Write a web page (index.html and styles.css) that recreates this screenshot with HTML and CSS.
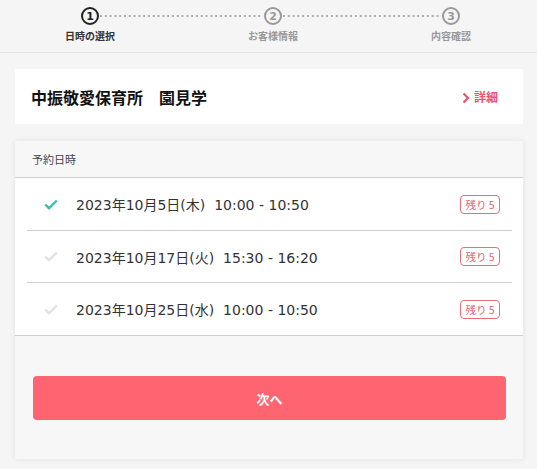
FILE: index.html
```html
<!DOCTYPE html>
<html lang="ja">
<head>
<meta charset="utf-8">
<link rel="stylesheet" href="styles.css">
</head>
<body>
<header class="stepper">
  <div class="step active"><span class="circle">1</span><span class="label">日時の選択</span></div>
  <div class="dots"></div>
  <div class="step"><span class="circle">2</span><span class="label">お客様情報</span></div>
  <div class="dots"></div>
  <div class="step"><span class="circle">3</span><span class="label">内容確認</span></div>
</header>
<main class="main">
  <section class="title-card">
    <h1 class="title">中振敬愛保育所　園見学</h1>
    <a class="detail">
      <svg class="chev" width="8" height="12" viewBox="0 0 8 12"><polyline points="1.5,1.5 6,6 1.5,10.5" fill="none" stroke="#e8566a" stroke-width="2.2"/></svg>
      詳細
    </a>
  </section>
  <section class="slot-card">
    <div class="slot-head">予約日時</div>
    <ul class="slots">
      <li class="slot">
        <svg class="check on" width="14" height="11" viewBox="0 0 14 11"><polyline points="1.2,5.5 5,9.2 12.8,1.5" fill="none" stroke-width="2.4"/></svg>
        <span class="when">2023年10月5日(木)&nbsp;&nbsp;10:00 - 10:50</span>
        <span class="badge">残り 5</span>
      </li>
      <li class="slot">
        <svg class="check" width="14" height="11" viewBox="0 0 14 11"><polyline points="1.2,5.5 5,9.2 12.8,1.5" fill="none" stroke-width="2.4"/></svg>
        <span class="when">2023年10月17日(火)&nbsp;&nbsp;15:30 - 16:20</span>
        <span class="badge">残り 5</span>
      </li>
      <li class="slot">
        <svg class="check" width="14" height="11" viewBox="0 0 14 11"><polyline points="1.2,5.5 5,9.2 12.8,1.5" fill="none" stroke-width="2.4"/></svg>
        <span class="when">2023年10月25日(水)&nbsp;&nbsp;10:00 - 10:50</span>
        <span class="badge">残り 5</span>
      </li>
    </ul>
    <div class="actions">
      <button class="next">次へ</button>
    </div>
  </section>
</main>
</body>
</html>
```

FILE: styles.css
```css
* { box-sizing: border-box; }
html, body { margin: 0; padding: 0; }
body {
  background: #f5f5f5;
  font-family: "Noto Sans CJK JP", "Noto Sans", sans-serif;
  color: #333;
  width: 537px;
  height: 469px;
  overflow: hidden;
}
.stepper {
  height: 53px;
  border-bottom: 1px solid #e0e0e0;
  display: grid;
  grid-template-columns: 60px 123px 60px 118px 60px;
  padding-left: 60px;
  padding-top: 7px;
  align-items: start;
}
.step {
  display: flex;
  flex-direction: column;
  align-items: center;
}
.circle {
  width: 18px;
  height: 18px;
  border: 2px solid #999;
  border-radius: 50%;
  display: flex;
  align-items: center;
  justify-content: center;
  font-family: "DejaVu Sans", sans-serif;
  font-weight: bold;
  font-size: 11px;
  line-height: 1;
  color: #999;
}
.label {
  margin-top: 4px;
  font-size: 10px;
  font-weight: bold;
  color: #999;
  white-space: nowrap;
  line-height: 14px;
}
.step.active .circle { border-color: #222; color: #222; }
.step.active .label { color: #333; }
.dots {
  height: 2px;
  margin: 8px -20px 0 -20px;
  background-image: linear-gradient(to right, #aaa 0, #aaa 2px, transparent 2px);
  background-size: 4.8px 2px;
  background-repeat: repeat-x;
}
.main {
  padding: 16px 14px 0 15px;
}
.title-card {
  background: #fff;
  height: 55px;
  display: flex;
  align-items: center;
  justify-content: space-between;
  padding: 0 25px 0 16px;
}
.title {
  margin: 0;
  font-size: 16px;
  font-weight: bold;
  color: #111;
}
.detail {
  display: flex;
  align-items: center;
  gap: 4px;
  color: #e8566a;
  font-size: 12px;
  font-weight: bold;
}
.chev { margin-top: 2px; }
.slot-card {
  margin-top: 17px;
  background: #f7f7f7;
  box-shadow: 0 0 6px rgba(0,0,0,0.08);
}
.slot-head {
  height: 37px;
  padding: 10px 17px 0;
  font-size: 11px;
  line-height: 16px;
  color: #444;
  border-bottom: 1px solid #d0d0d0;
}
.slots {
  list-style: none;
  margin: 0;
  padding: 0 11px 0 12px;
  background: #fff;
  border-bottom: 1px solid #d0d0d0;
}
.slot {
  height: 52px;
  display: flex;
  align-items: center;
  padding: 0 12px 0 17px;
  border-top: 1px solid #d0d0d0;
}
.slot:first-child { border-top: none; }
.slot:last-child { height: 53px; }
.check { stroke: #e2e2e2; flex: none; }
.check.on { stroke: #3fbfb0; }
.when {
  margin-left: 18px;
  font-family: "DejaVu Sans", "Noto Sans CJK JP", sans-serif;
  font-size: 14px;
  color: #333;
  white-space: nowrap;
  flex: 1;
}
.badge {
  border: 1px solid #e07079;
  border-radius: 4px;
  color: #e06570;
  font-size: 10.5px;
  height: 19px;
  width: 40px;
  display: flex;
  align-items: center;
  justify-content: center;
}
.actions {
  padding: 40px 17px 39px 18px;
}
.next {
  display: block;
  width: 100%;
  height: 44px;
  border: none;
  border-radius: 4px;
  background: #ff6570;
  color: #fff;
  font-family: "Noto Sans CJK JP", sans-serif;
  font-size: 13px;
  font-weight: bold;
}
```
